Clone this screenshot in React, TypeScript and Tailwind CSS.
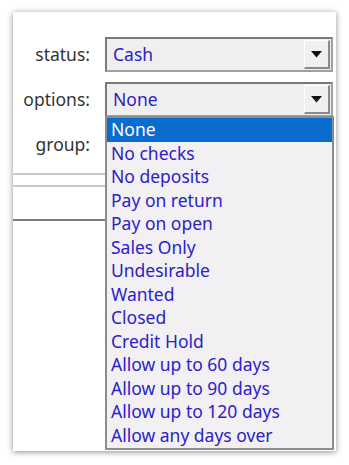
import React from 'react';

const options = [
  'None',
  'No checks',
  'No deposits',
  'Pay on return',
  'Pay on open',
  'Sales Only',
  'Undesirable',
  'Wanted',
  'Closed',
  'Credit Hold',
  'Allow up to 60 days',
  'Allow up to 90 days',
  'Allow up to 120 days',
  'Allow any days over',
];

const Arrow: React.FC = () => (
  <div className="w-[26px] h-full border-l border-t border-[#ffffff] border-r-2 border-b-2 border-r-[#8a8a8a] border-b-[#8a8a8a] flex items-center justify-center bg-[#f0f0f0]">
    <svg width="11" height="7" viewBox="0 0 11 7">
      <path d="M0 0 L11 0 L5.5 6.5 Z" fill="#111" />
    </svg>
  </div>
);

const Select: React.FC<{ value: string }> = ({ value }) => (
  <div className="flex-1 h-[35px] flex items-stretch bg-[#f0eff0] border-2 border-t-[#7a7a7a] border-l-[#7a7a7a] border-r-[#a0a0a0] border-b-[#a0a0a0] p-[1px]">
    <div className="flex-1 pl-[5px] flex items-center text-[#2a22c8]">{value}</div>
    <Arrow />
  </div>
);

const App: React.FC = () => {
  return (
    <div
      className="w-[349px] h-[465px] bg-white pt-[12px] pl-[13px]"
      style={{ fontFamily: '"Noto Sans", "Open Sans", sans-serif' }}
    >
      <div className="relative w-[323px] h-[439px] bg-white shadow-[0_1px_6px_rgba(0,0,0,0.45)] text-[17.5px]">
        <div className="pt-[25px] pr-[3px] flex flex-col gap-[10px]">
          <div className="flex items-center">
            <div className="w-[78px] text-right text-[#333] pr-[1px]">status:</div>
            <div className="w-[14px]" />
            <Select value="Cash" />
          </div>
          <div className="flex items-center">
            <div className="w-[78px] text-right text-[#333] pr-[1px]">options:</div>
            <div className="w-[14px]" />
            <Select value="None" />
          </div>
          <div className="flex items-center h-[35px]">
            <div className="w-[78px] text-right text-[#333] pr-[1px]">group:</div>
          </div>
        </div>
        <div className="w-[92px] mt-[11px]">
          <div className="h-[2px] bg-[#c8c8c8]" />
          <div className="h-[10px]" />
          <div className="h-[2px] bg-[#c8c8c8]" />
          <div className="h-[32px]" />
          <div className="h-[2px] bg-[#7c7c7c]" />
        </div>

        <div className="absolute left-[92px] top-[104px] w-[229px] border-2 border-[#8c8c8c] bg-[#f2f0f2] pb-[1px]">
          {options.map((o, i) => (
            <div
              key={o}
              className={
                'h-[23.5px] leading-[23.5px] pl-[4px] ' +
                (i === 0 ? 'bg-[#0a6ccf] text-white' : 'text-[#2a22c8]')
              }
            >
              {o}
            </div>
          ))}
        </div>
      </div>
    </div>
  );
};

export default App;
